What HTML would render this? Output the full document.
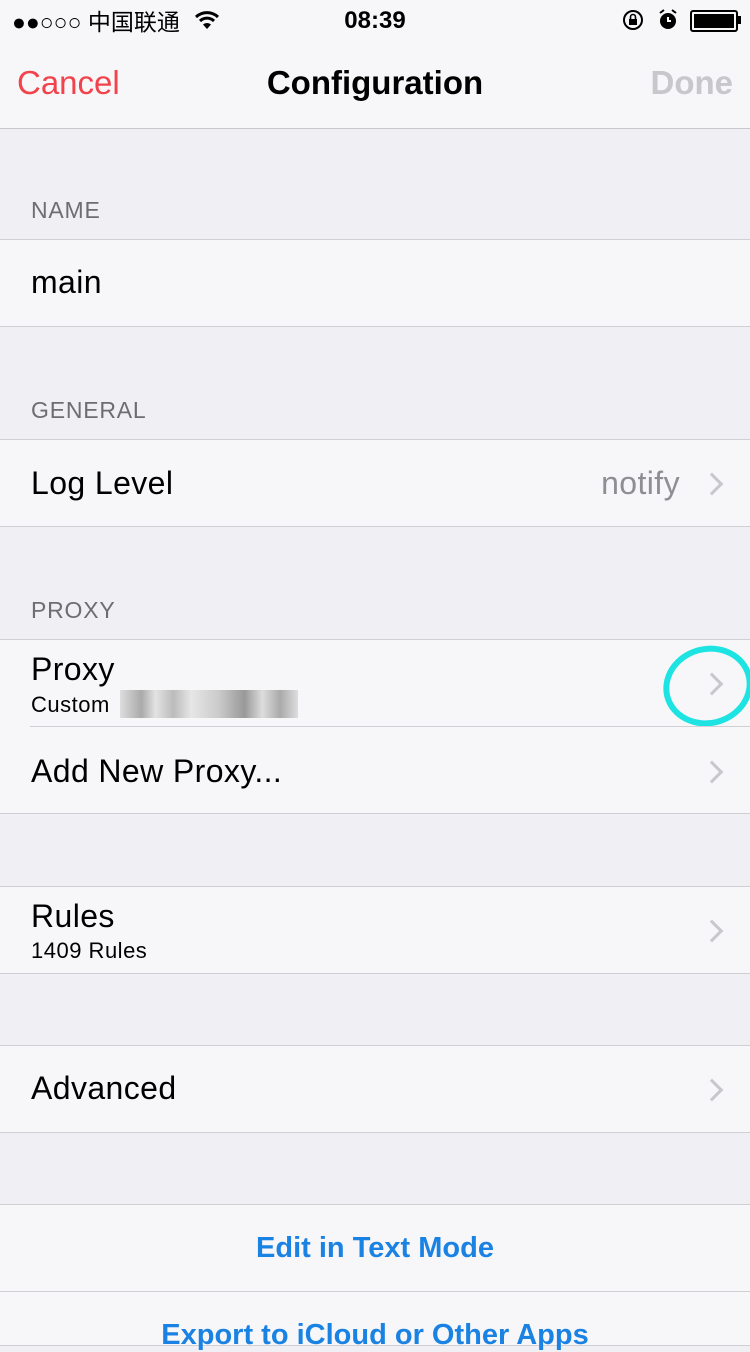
<!DOCTYPE html>
<html><head><meta charset="utf-8"><style>
body{margin:0;width:750px;height:1334px;overflow:hidden;background:#efeff4;font-family:"Liberation Sans","Noto Sans CJK SC",sans-serif;position:relative}
.a{position:absolute}
.cell{position:absolute;left:0;width:750px;background:#f7f7f9;border-top:1px solid #d0d0d4;border-bottom:1px solid #d0d0d4}
.t{position:absolute;left:31px;font-size:32px;color:#000;letter-spacing:0.4px}
.h{position:absolute;left:31px;font-size:23px;color:#6d6d72;letter-spacing:0.8px}
.chev{position:absolute;right:30px;width:13px;height:13px;border-top:3px solid #c7c7cc;border-right:3px solid #c7c7cc;transform:rotate(45deg)}
.s{position:absolute;left:31px;font-size:22px;color:#000;letter-spacing:0.5px}
</style></head><body>
<div class="a" style="left:0;top:0;width:750px;height:128px;background:#f7f7f9;border-bottom:1px solid #c8c8cc"></div>
<div class="a" style="left:12px;top:3px;font-size:23px">●●○○○ 中国联通</div>
<svg class="a" style="left:194px;top:9px" width="26" height="22" viewBox="0 0 26 22"><path d="M2 8 A16 16 0 0 1 24 8" stroke="#000" stroke-width="3" fill="none"/><path d="M6 12 A10 10 0 0 1 20 12" stroke="#000" stroke-width="3" fill="none"/><path d="M13 20 L9 15.5 A6 6 0 0 1 17 15.5Z" fill="#000"/></svg>
<div class="a" style="left:0;width:750px;text-align:center;top:7px;font-size:24px;font-weight:bold">08:39</div>
<svg class="a" style="left:622px;top:9px" width="24" height="22"><circle cx="11" cy="11" r="9" stroke="#000" stroke-width="2" fill="none"/><rect x="7" y="10" width="8" height="6" fill="#000"/><path d="M8.5 10 V8 a2.5 2.5 0 0 1 5 0 V10" stroke="#000" stroke-width="1.6" fill="none"/></svg>
<svg class="a" style="left:657px;top:8px" width="22" height="24"><circle cx="11" cy="13" r="8" fill="#000"/><path d="M11 9 V13 H14" stroke="#fff" stroke-width="2" fill="none"/><path d="M3 5 L7 2 M19 5 L15 2" stroke="#000" stroke-width="2"/></svg>
<div class="a" style="left:690px;top:10px;width:44px;height:18px;border:2px solid #000;border-radius:3px"><div style="margin:2px;height:14px;width:40px;background:#000"></div></div>
<div class="a" style="left:738px;top:16px;width:3px;height:8px;background:#000"></div>
<div class="a" style="left:17px;top:64px;font-size:33px;color:#f2424b">Cancel</div>
<div class="a" style="left:0;width:750px;text-align:center;top:64px;font-size:33px;font-weight:bold;color:#000">Configuration</div>
<div class="a" style="right:17px;top:64px;font-size:33px;color:#c7c7cc;font-weight:bold">Done</div>

<div class="h" style="top:197px">NAME</div>
<div class="cell" style="top:239px;height:86px"><div class="t" style="top:24px">main</div></div>
<div class="h" style="top:397px">GENERAL</div>
<div class="cell" style="top:439px;height:86px"><div class="t" style="top:25px">Log Level</div><div class="a" style="right:70px;top:25px;font-size:32px;color:#8e8e93;letter-spacing:0.4px">notify</div><div class="chev" style="top:36px"></div></div>
<div class="h" style="top:597px">PROXY</div>
<div class="cell" style="top:639px;height:173px">
<div class="t" style="top:11px">Proxy</div><div class="s" style="top:52px">Custom</div>
<div class="a" style="left:120px;top:50px;width:178px;height:28px;background:linear-gradient(90deg,#ddd,#aaa 12%,#e3e3e3 20%,#bbb 30%,#e6e6e6 40%,#ccc 55%,#999 70%,#ddd 80%,#aaa 90%,#ddd)"></div>
<div class="chev" style="top:36px"></div>
<div class="a" style="left:663px;top:6px;width:78px;height:68px;border:6px solid #1de3e3;border-radius:50%;transform:rotate(-15deg)"></div>
<div class="a" style="left:30px;top:86px;width:720px;height:1px;background:#d0d0d4"></div>
<div class="t" style="top:113px">Add New Proxy...</div><div class="chev" style="top:124px"></div>
</div>
<div class="cell" style="top:886px;height:86px"><div class="t" style="top:11px">Rules</div><div class="s" style="top:51px">1409 Rules</div><div class="chev" style="top:36px"></div></div>
<div class="cell" style="top:1045px;height:86px"><div class="t" style="top:24px">Advanced</div><div class="chev" style="top:36px"></div></div>
<div class="cell" style="top:1204px;height:140px">
<div class="a" style="left:0;width:750px;text-align:center;top:27px;font-size:29px;color:#1a82e2;font-weight:bold">Edit in Text Mode</div>
<div class="a" style="left:0;top:86px;width:750px;height:1px;background:#d0d0d4"></div>
<div class="a" style="left:0;width:750px;text-align:center;top:114px;font-size:29px;color:#1a82e2;font-weight:bold">Export to iCloud or Other Apps</div>
</div>
</body></html>
